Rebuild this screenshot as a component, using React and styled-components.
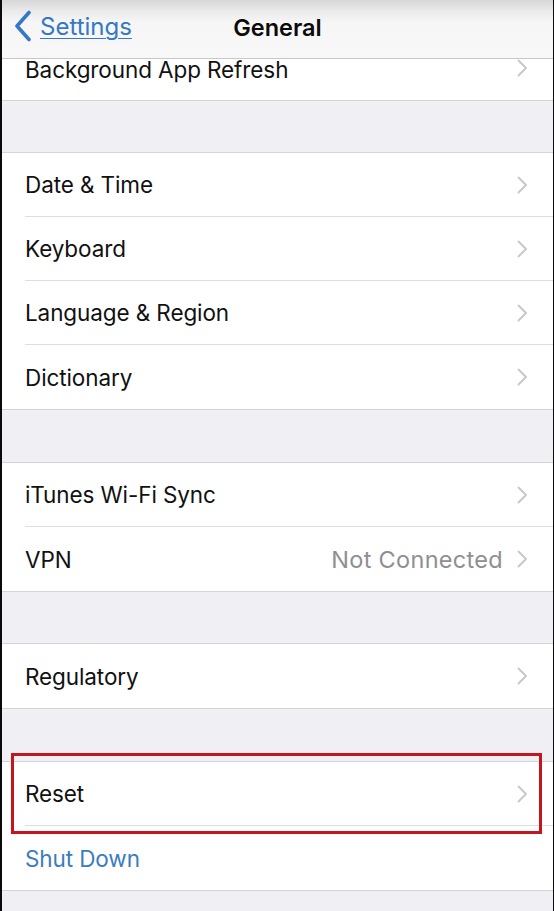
import React from "react";
import styled, { createGlobalStyle } from "styled-components";

const Global = createGlobalStyle`
  html, body { margin: 0; padding: 0; background: #efeff4; }
  body { font-family: Inter, "Noto Sans", "Liberation Sans", sans-serif; -webkit-font-smoothing: antialiased; }
  * { box-sizing: border-box; }
`;

const Frame = styled.div`
  width: 554px;
  height: 911px;
  overflow: hidden;
  background: #efeff4;
  border-left: 2px solid #0a0a0a;
  border-right: 1px solid #0a0a0a;
  display: flex;
  flex-direction: column;
`;

const NavBar = styled.div`
  height: 59px;
  flex: none;
  position: relative;
  display: flex;
  align-items: center;
  justify-content: center;
  background: linear-gradient(#d6d6d6 0px, #e9e9e9 10px, #f6f6f6 22px, #f8f8f8 100%);
  border-bottom: 1px solid #c8c8cc;
  padding-bottom: 4px;
`;

const Back = styled.a`
  position: absolute;
  left: 12px;
  top: 10px;
  display: flex;
  align-items: center;
  gap: 8px;
  color: #3478c6;
  font-size: 24px;
  text-decoration: underline;
  text-underline-offset: 3px;
  text-decoration-thickness: 1px;
`;

const Title = styled.div`
  font-size: 23.5px;
  font-weight: 600;
  color: #0b0b0b;
`;

const Gap = styled.div`
  height: ${(p) => p.h}px;
  flex: none;
`;

const Group = styled.div`
  background: #fff;
  border-top: ${(p) => (p.noTop ? "none" : "1px solid #d4d4d8")};
  border-bottom: 1px solid #d4d4d8;
  flex: none;
`;

const RowWrap = styled.div`
  position: relative;
`;

const Row = styled.div`
  height: ${(p) => p.h || 64}px;
  display: flex;
  align-items: ${(p) => (p.top ? "flex-start" : "center")};
  margin-left: 23px;
  padding-right: 25px;
  border-bottom: ${(p) => (p.last ? "none" : "1px solid #dedee2")};
  gap: 14px;
`;

const Label = styled.div`
  flex: 1;
  font-size: 22.5px;
  color: ${(p) => (p.action ? "#3b7cc0" : "#111")};
  letter-spacing: -0.1px;
  margin-top: ${(p) => p.shift || 0}px;
`;

const Detail = styled.div`
  font-size: 23.5px;
  letter-spacing: 0.3px;
  color: #8e8e93;
`;

const Highlight = styled.div`
  position: absolute;
  left: 9px;
  right: 11px;
  top: -9px;
  bottom: -8px;
  border: 3px solid #c4161e;
  pointer-events: none;
`;

const Chevron = () => (
  <svg width="11" height="18" viewBox="0 0 11 18" fill="none">
    <path d="M1.5 1.5 L9 9 L1.5 16.5" stroke="#c7c7cc" strokeWidth="1.8" strokeLinecap="round" strokeLinejoin="round" />
  </svg>
);

const BackChevron = () => (
  <svg width="18" height="32" viewBox="0 0 18 32" fill="none">
    <path d="M15 2.5 L3 16 L15 29.5" stroke="#3478c6" strokeWidth="3.6" strokeLinecap="round" strokeLinejoin="round" />
  </svg>
);

const Item = ({ label, detail, last, action, h, top, shift }) => (
  <Row last={last} h={h} top={top}>
    <Label action={action} shift={shift}>{label}</Label>
    {detail && <Detail>{detail}</Detail>}
    {!action && <Chevron />}
  </Row>
);

export default function App() {
  return (
    <>
      <Global />
      <Frame>
        <NavBar>
          <Back>
            <BackChevron />
            Settings
          </Back>
          <Title>General</Title>
        </NavBar>
        <Group noTop>
          <Item label="Background App Refresh" last h={41} top shift={-3} />
        </Group>
        <Gap h={51} />
        <Group>
          <Item label="Date & Time" />
          <Item label="Keyboard" />
          <Item label="Language & Region" />
          <Item label="Dictionary" last />
        </Group>
        <Gap h={52} />
        <Group>
          <Item label="iTunes Wi-Fi Sync" />
          <Item label="VPN" detail="Not Connected" last />
        </Group>
        <Gap h={51} />
        <Group>
          <Item label="Regulatory" last />
        </Group>
        <Gap h={52} />
        <Group>
          <RowWrap>
            <Item label="Reset" />
            <Highlight />
          </RowWrap>
          <Item label="Shut Down" action last />
        </Group>
      </Frame>
    </>
  );
}
